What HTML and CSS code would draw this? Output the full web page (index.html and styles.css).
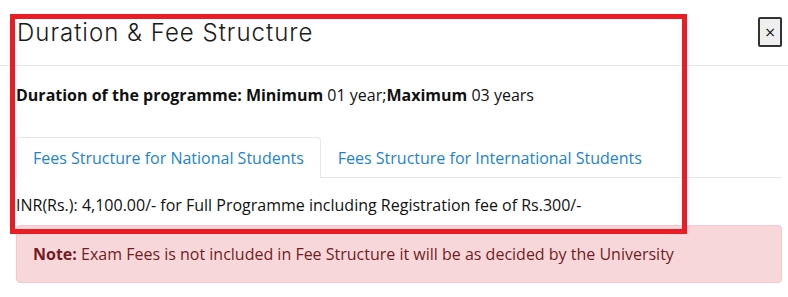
FILE: index.html
```html
<!DOCTYPE html>
<html lang="en">
<head>
<meta charset="utf-8">
<title>Duration &amp; Fee Structure</title>
<link rel="stylesheet" href="styles.css">
</head>
<body>
<div class="modal">
  <div class="modal-header">
    <h4 class="modal-title">Duration &amp; Fee Structure</h4>
    <button class="close" type="button">×</button>
  </div>
  <div class="modal-body">
    <p class="duration"><b>Duration of the programme: Minimum</b> 01 year;<b>Maximum</b> 03 years</p>
    <ul class="tabs">
      <li class="tab active">Fees Structure for National Students</li>
      <li class="tab">Fees Structure for International Students</li>
    </ul>
    <p class="fee">INR(Rs.): 4,100.00/- for Full Programme including Registration fee of Rs.300/-</p>
    <div class="alert"><b>Note:</b> Exam Fees is not included in Fee Structure it will be as decided by the University</div>
  </div>
  <div class="highlight"></div>
</div>
</body>
</html>
```
FILE: styles.css
```css
html, body {
  margin: 0;
  padding: 0;
  background: #fff;
}
body {
  font-family: "Open Sans", "Liberation Sans", sans-serif;
  color: #212529;
  width: 788px;
  height: 297px;
  overflow: hidden;
}
.modal {
  position: relative;
  width: 788px;
}
.modal-header {
  display: flex;
  justify-content: space-between;
  align-items: flex-start;
  height: 65px;
  border-bottom: 1px solid #e5e7eb;
  padding: 0 6px 0 17px;
}
.modal-title {
  margin: 18px 0 0 0;
  font-family: "Inter", "Open Sans", sans-serif;
  font-weight: 300;
  font-size: 24px;
  line-height: 30px;
  letter-spacing: 1px;
  color: #1a1a1a;
}
.close {
  margin-top: 17px;
  width: 24px;
  height: 30px;
  padding: 0;
  border: 2px solid #333;
  border-radius: 2px;
  background: #efefef;
  font-family: "DejaVu Sans", sans-serif;
  font-size: 14px;
  line-height: 24px;
  color: #111;
}
.modal-body {
  padding: 0 6px 0 16px;
}
.duration {
  margin: 0;
  padding-top: 18px;
  font-size: 16px;
  line-height: 22px;
  color: #111;
}
.tabs {
  list-style: none;
  margin: 31px 0 0 0;
  padding: 0;
  display: flex;
  border-bottom: 1px solid #e5e7eb;
}
.tab {
  padding: 0 16px;
  height: 39px;
  line-height: 40px;
  font-size: 16px;
  color: #2183cf;
  border: 1px solid transparent;
  border-bottom: none;
  border-radius: 4px 4px 0 0;
  margin-bottom: -1px;
}
.tab.active {
  border-color: #e5e7eb;
  background: #fff;
  height: 40px;
}
.fee {
  margin: 0;
  padding-top: 16px;
  font-size: 16px;
  line-height: 22px;
  color: #111;
}
.alert {
  margin-top: 9px;
  height: 58px;
  box-sizing: border-box;
  padding: 0 16px;
  line-height: 56px;
  background: #f8d7da;
  border: 1px solid #f5c6cb;
  border-radius: 4px;
  color: #721c24;
  font-size: 16px;
}
.highlight {
  position: absolute;
  left: 10px;
  top: 14px;
  width: 677px;
  height: 220px;
  box-sizing: border-box;
  border: 5px solid #ec1c24;
  pointer-events: none;
}
```
